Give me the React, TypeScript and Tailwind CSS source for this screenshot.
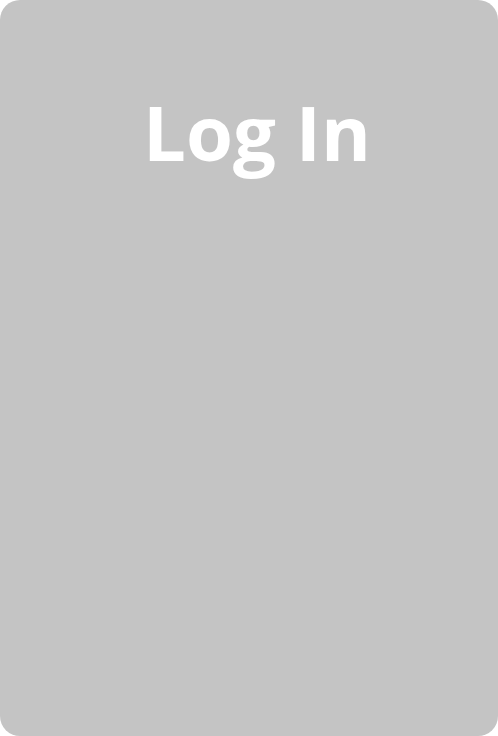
export default function App() {
  return (
    <div className="h-[736px] w-[498px] bg-white">
      <div className="flex h-full w-full flex-col items-center rounded-[20px] bg-[#c4c4c4] pl-[16px] pt-[94px]">
        <h1 className="text-[76px] font-bold leading-none text-white [font-family:'Open_Sans',sans-serif]">
          Log In
        </h1>
      </div>
    </div>
  );
}
